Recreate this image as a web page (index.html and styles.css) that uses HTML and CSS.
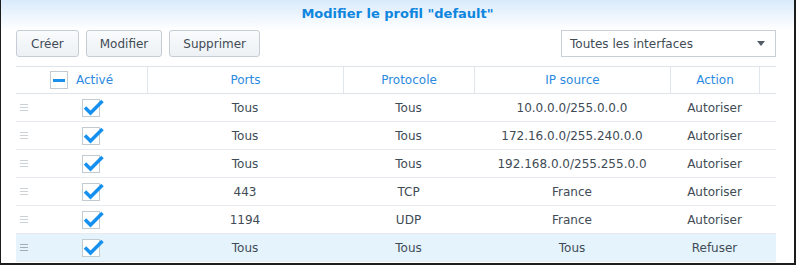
FILE: index.html
```html
<!DOCTYPE html>
<html lang="fr">
<head>
    <meta charset="UTF-8">
    <title>Modifier le profil</title>
    <link rel="stylesheet" href="styles.css">
</head>
<body>
    <div class="title">Modifier le profil "default"</div>

    <div class="toolbar">
        <button class="btn wide">Créer</button>
        <button class="btn">Modifier</button>
        <button class="btn">Supprimer</button>
        <div class="spacer"></div>
        <div class="select">
            <span>Toutes les interfaces</span>
            <span class="arrow"></span>
        </div>
    </div>

    <div class="grid">
        <div class="row head">
            <div class="cell span2">
                <span class="box"><span class="minus"></span></span>
                <span>Activé</span>
            </div>
            <div class="cell sep">Ports</div>
            <div class="cell sep">Protocole</div>
            <div class="cell sep">IP source</div>
            <div class="cell sep">Action</div>
            <div class="cell sep"></div>
        </div>

        <div class="row">
            <div class="cell handle"><svg width="8" height="7"><path d="M0 .5h8M0 3.5h8M0 6.5h8"/></svg></div>
            <div class="cell"><span class="box"><svg class="tick" width="22" height="18"><path d="M3 9.5l5.5 5.5 12-12"/></svg></span></div>
            <div class="cell">Tous</div>
            <div class="cell">Tous</div>
            <div class="cell">10.0.0.0/255.0.0.0</div>
            <div class="cell">Autoriser</div>
            <div class="cell"></div>
        </div>
        <div class="row">
            <div class="cell handle"><svg width="8" height="7"><path d="M0 .5h8M0 3.5h8M0 6.5h8"/></svg></div>
            <div class="cell"><span class="box"><svg class="tick" width="22" height="18"><path d="M3 9.5l5.5 5.5 12-12"/></svg></span></div>
            <div class="cell">Tous</div>
            <div class="cell">Tous</div>
            <div class="cell">172.16.0.0/255.240.0.0</div>
            <div class="cell">Autoriser</div>
            <div class="cell"></div>
        </div>
        <div class="row">
            <div class="cell handle"><svg width="8" height="7"><path d="M0 .5h8M0 3.5h8M0 6.5h8"/></svg></div>
            <div class="cell"><span class="box"><svg class="tick" width="22" height="18"><path d="M3 9.5l5.5 5.5 12-12"/></svg></span></div>
            <div class="cell">Tous</div>
            <div class="cell">Tous</div>
            <div class="cell">192.168.0.0/255.255.0.0</div>
            <div class="cell">Autoriser</div>
            <div class="cell"></div>
        </div>
        <div class="row">
            <div class="cell handle"><svg width="8" height="7"><path d="M0 .5h8M0 3.5h8M0 6.5h8"/></svg></div>
            <div class="cell"><span class="box"><svg class="tick" width="22" height="18"><path d="M3 9.5l5.5 5.5 12-12"/></svg></span></div>
            <div class="cell">443</div>
            <div class="cell">TCP</div>
            <div class="cell">France</div>
            <div class="cell">Autoriser</div>
            <div class="cell"></div>
        </div>
        <div class="row">
            <div class="cell handle"><svg width="8" height="7"><path d="M0 .5h8M0 3.5h8M0 6.5h8"/></svg></div>
            <div class="cell"><span class="box"><svg class="tick" width="22" height="18"><path d="M3 9.5l5.5 5.5 12-12"/></svg></span></div>
            <div class="cell">1194</div>
            <div class="cell">UDP</div>
            <div class="cell">France</div>
            <div class="cell">Autoriser</div>
            <div class="cell"></div>
        </div>
        <div class="row selected">
            <div class="cell handle"><svg width="8" height="7"><path d="M0 .5h8M0 3.5h8M0 6.5h8"/></svg></div>
            <div class="cell"><span class="box"><svg class="tick" width="22" height="18"><path d="M3 9.5l5.5 5.5 12-12"/></svg></span></div>
            <div class="cell">Tous</div>
            <div class="cell">Tous</div>
            <div class="cell">Tous</div>
            <div class="cell">Refuser</div>
            <div class="cell"></div>
        </div>
    </div>
</body>
</html>
```

FILE: styles.css
```css
html, body {
    margin: 0;
    padding: 0;
}
body {
    box-sizing: border-box;
    width: 796px;
    height: 265px;
    overflow: hidden;
    background: white;
    border-left: 1px solid #1c1c1c;
    border-right: 2px solid #1c1c1c;
    border-bottom: 2px solid #1c1c1c;
    font-family: "DejaVu Sans", Verdana, sans-serif;
    font-size: 12px;
    color: #414b55;
}
.title {
    height: 30px;
    line-height: 27px;
    text-align: center;
    font-size: 13px;
    font-weight: bold;
    color: #0f86de;
    background: linear-gradient(#d9eafb, #ffffff 30px);
}
.toolbar {
    display: flex;
    gap: 7px;
    height: 27px;
    padding: 0 18px 0 15px;
    margin-bottom: 9px;
}
.btn {
    height: 27px;
    padding: 0 13px;
    font-family: inherit;
    font-size: 12px;
    color: #414b55;
    border: 1px solid #c6cdd5;
    border-radius: 3px;
    background: linear-gradient(#f9fbfc, #edf1f5);
}
.btn.wide {
    padding: 0 14px;
}
.spacer {
    flex: 1;
}
.select {
    box-sizing: border-box;
    width: 215px;
    height: 27px;
    display: flex;
    align-items: center;
    justify-content: space-between;
    padding: 0 10px 0 8px;
    border: 1px solid #c8cfd7;
    background: white;
}
.arrow {
    width: 0;
    height: 0;
    border-left: 4.5px solid transparent;
    border-right: 4.5px solid transparent;
    border-top: 5px solid #555d68;
}
.grid {
    width: 760px;
    margin-left: 15px;
}
.row {
    display: grid;
    grid-template-columns: 18px 113px 196px 131px 196px 89px 17px;
    height: 28px;
    box-sizing: border-box;
    border-bottom: 1px solid #e7ebef;
}
.row.head {
    border-top: 1px solid #dfe4ea;
    border-bottom: 1px solid #dfe4ea;
    color: #2a8ae0;
}
.row.selected {
    background: #e5f3fd;
}
.cell {
    display: flex;
    align-items: center;
    justify-content: center;
    box-sizing: border-box;
    white-space: nowrap;
}
.span2 {
    grid-column: span 2;
    gap: 8px;
}
.sep {
    border-left: 1px solid #e1e6ec;
}
.handle {
    justify-content: flex-start;
    padding-left: 4px;
}
.handle path {
    stroke: #cdd2d7;
    stroke-width: 1;
    fill: none;
}
.selected .handle path {
    stroke: #a4acb5;
}
.box {
    position: relative;
    box-sizing: border-box;
    width: 18px;
    height: 18px;
    border: 1px solid #c2cad2;
    background: white;
}
.head .box {
    display: flex;
    align-items: center;
    justify-content: center;
}
.minus {
    width: 12px;
    height: 3px;
    background: #1a90ea;
}
.tick {
    position: absolute;
    left: -1px;
    top: -2px;
}
.tick path {
    fill: none;
    stroke: #1690ee;
    stroke-width: 3.5;
    stroke-linejoin: miter;
}
```
